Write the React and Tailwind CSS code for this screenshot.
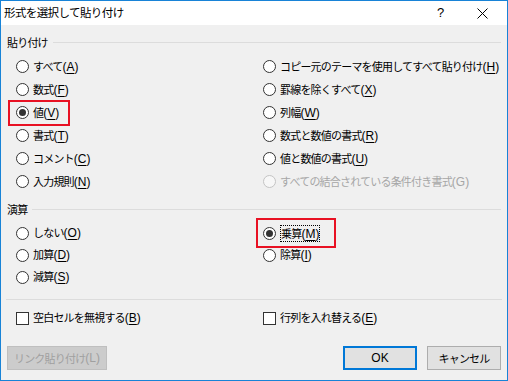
import React from "react";

const font = { fontFamily: '"Noto Sans CJK JP", "Noto Sans", sans-serif' };
const latin = { fontFamily: '"Liberation Sans", "Noto Sans CJK JP", sans-serif' };

function Label({ text, k, disabled }) {
  return (
    <span className={disabled ? "text-[#a6a6a6]" : "text-black"}>
      {text}
      <span style={latin} className="text-[12px] tracking-normal">
        ({disabled ? k : <span className="underline underline-offset-2">{k}</span>})
      </span>
    </span>
  );
}

function Radio({ text, k, checked, disabled, box, focus }) {
  return (
    <div className="relative flex h-full items-center gap-[4px]">
      {box && (
        <div
          className={`pointer-events-none absolute border-2 border-[#e81123] ${box}`}
        />
      )}
      <span
        className={`flex h-[13px] w-[13px] shrink-0 items-center justify-center rounded-full border ${
          disabled ? "border-[#c4c4c4] bg-[#f7f7f7]" : "border-[#333] bg-white"
        }`}
      >
        {checked && <span className="h-[7px] w-[7px] rounded-full bg-[#333]" />}
      </span>
      {focus ? (
        <span className="border border-dotted border-black leading-[14px]">
          <Label text={text} k={k} />
        </span>
      ) : (
        <Label text={text} k={k} disabled={disabled} />
      )}
    </div>
  );
}

function Check({ text, k }) {
  return (
    <div className="flex h-full items-center gap-[4px]">
      <span className="h-[13px] w-[13px] shrink-0 border border-[#333] bg-white" />
      <Label text={text} k={k} />
    </div>
  );
}

function GroupHeader({ title }) {
  return (
    <div className="flex h-[16px] items-center pl-[6px] pr-[6px]">
      <span>{title}</span>
      <div className="ml-[5px] h-px flex-1 bg-[#dcdcdc]" />
    </div>
  );
}

const pasteRows = [
  [
    { text: "すべて", k: "A" },
    { text: "コピー元のテーマを使用してすべて貼り付け", k: "H" },
  ],
  [
    { text: "数式", k: "F" },
    { text: "罫線を除くすべて", k: "X" },
  ],
  [
    { text: "値", k: "V", checked: true, box: "-left-[8px] top-[-1px] h-[26px] w-[62px]" },
    { text: "列幅", k: "W" },
  ],
  [
    { text: "書式", k: "T" },
    { text: "数式と数値の書式", k: "R" },
  ],
  [
    { text: "コメント", k: "C" },
    { text: "値と数値の書式", k: "U" },
  ],
  [
    { text: "入力規則", k: "N" },
    { text: "すべての結合されている条件付き書式", k: "G", disabled: true },
  ],
];

const opRows = [
  [
    { text: "しない", k: "O" },
    {
      text: "乗算",
      k: "M",
      checked: true,
      focus: true,
      box: "-left-[7px] top-[-4px] h-[30px] w-[80px]",
    },
  ],
  [
    { text: "加算", k: "D" },
    { text: "除算", k: "I" },
  ],
  [{ text: "減算", k: "S" }, null],
];

export default function App() {
  return (
    <div
      style={font}
      className="flex h-[381px] w-[508px] flex-col border border-[#1883d7] bg-[#f0f0f0] text-[11px] tracking-[-0.8px] text-black"
    >
      {/* title bar */}
      <div className="flex h-[24px] shrink-0 items-center bg-white pl-[3px] text-[11.5px] tracking-[-0.6px]">
        <span className="flex-1">形式を選択して貼り付け</span>
        <span style={latin} className="w-[12px] text-[13px] tracking-normal">?</span>
        <div className="flex w-[58px] justify-center pl-[8px]">
          <svg width="11" height="11" viewBox="0 0 11 11">
            <path d="M0.5 0.5 L10.5 10.5 M10.5 0.5 L0.5 10.5" stroke="#000" strokeWidth="1" />
          </svg>
        </div>
      </div>

      <div className="mt-[9px]">
        <GroupHeader title="貼り付け" />
      </div>
      <div className="grid grid-cols-[247px_1fr] pl-[15px] pt-[5px]">
        {pasteRows.map((row, i) => (
          <React.Fragment key={i}>
            {row.map((r, j) => (
              <div key={j} className="h-[23px]">
                <Radio {...r} />
              </div>
            ))}
          </React.Fragment>
        ))}
      </div>

      <div className="mt-[8px]">
        <GroupHeader title="演算" />
      </div>
      <div className="grid grid-cols-[247px_1fr] pl-[15px] pt-[5px]">
        {opRows.map((row, i) => (
          <React.Fragment key={i}>
            {row.map((r, j) => (
              <div key={j} className="h-[22px]">
                {r && <Radio {...r} />}
              </div>
            ))}
          </React.Fragment>
        ))}
      </div>

      <div className="mx-[5px] mt-[11px] h-px bg-[#dcdcdc]" />

      <div className="mt-[8px] grid h-[20px] grid-cols-[247px_1fr] pl-[15px]">
        <Check text="空白セルを無視する" k="B" />
        <Check text="行列を入れ替える" k="E" />
      </div>

      <div className="mt-[18px] flex items-center pl-[6px] pr-[6px]">
        <div className="flex h-[24px] w-[100px] items-center justify-center border border-[#bfbfbf] bg-[#cccccc] text-[#a0a0a0]">
          リンク貼り付け
          <span style={latin} className="text-[12px] tracking-normal">(L)</span>
        </div>
        <div className="flex-1" />
        <div
          style={latin}
          className="flex h-[24px] w-[74px] items-center justify-center border-2 border-[#0078d7] bg-[#e1e1e1] text-[12px] tracking-normal"
        >
          OK
        </div>
        <div className="ml-[10px] flex h-[24px] w-[74px] items-center justify-center border border-[#adadad] bg-[#e1e1e1]">
          キャンセル
        </div>
      </div>
    </div>
  );
}
